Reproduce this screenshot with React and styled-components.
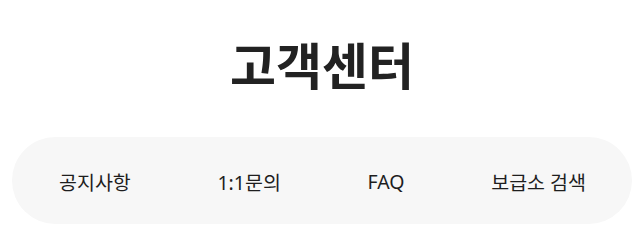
import React from 'react';
import styled, { createGlobalStyle } from 'styled-components';

const GlobalStyle = createGlobalStyle`
  html, body {
    margin: 0;
    padding: 0;
    background: #ffffff;
    font-family: "Noto Sans", "Noto Sans CJK KR", sans-serif;
    color: #222222;
  }
`;

const Page = styled.div`
  width: 644px;
  padding: 26px 12px 0;
  box-sizing: border-box;
`;

const Title = styled.h1`
  margin: 0;
  text-align: center;
  font-family: "Noto Sans CJK KR", sans-serif;
  font-size: 50px;
  font-weight: 700;
  line-height: 74px;
  letter-spacing: 0;
  color: #222222;
`;

const Nav = styled.nav`
  margin-top: 37px;
  height: 87px;
  border-radius: 44px;
  background: #f7f7f7;
  display: flex;
  align-items: center;
  justify-content: space-between;
  padding: 0 46px 0 47px;
`;

const NavItem = styled.a`
  font-family: "Noto Sans", "Noto Sans CJK KR", sans-serif;
  font-size: 19.5px;
  font-weight: 400;
  color: #1e1e1e;
  text-decoration: none;
  cursor: pointer;
  padding-top: 2px;
`;

const items = ['공지사항', '1:1문의', 'FAQ', '보급소 검색'];

export default function App() {
  return (
    <Page>
      <GlobalStyle />
      <Title>고객센터</Title>
      <Nav>
        {items.map((label) => (
          <NavItem key={label}>{label}</NavItem>
        ))}
      </Nav>
    </Page>
  );
}
